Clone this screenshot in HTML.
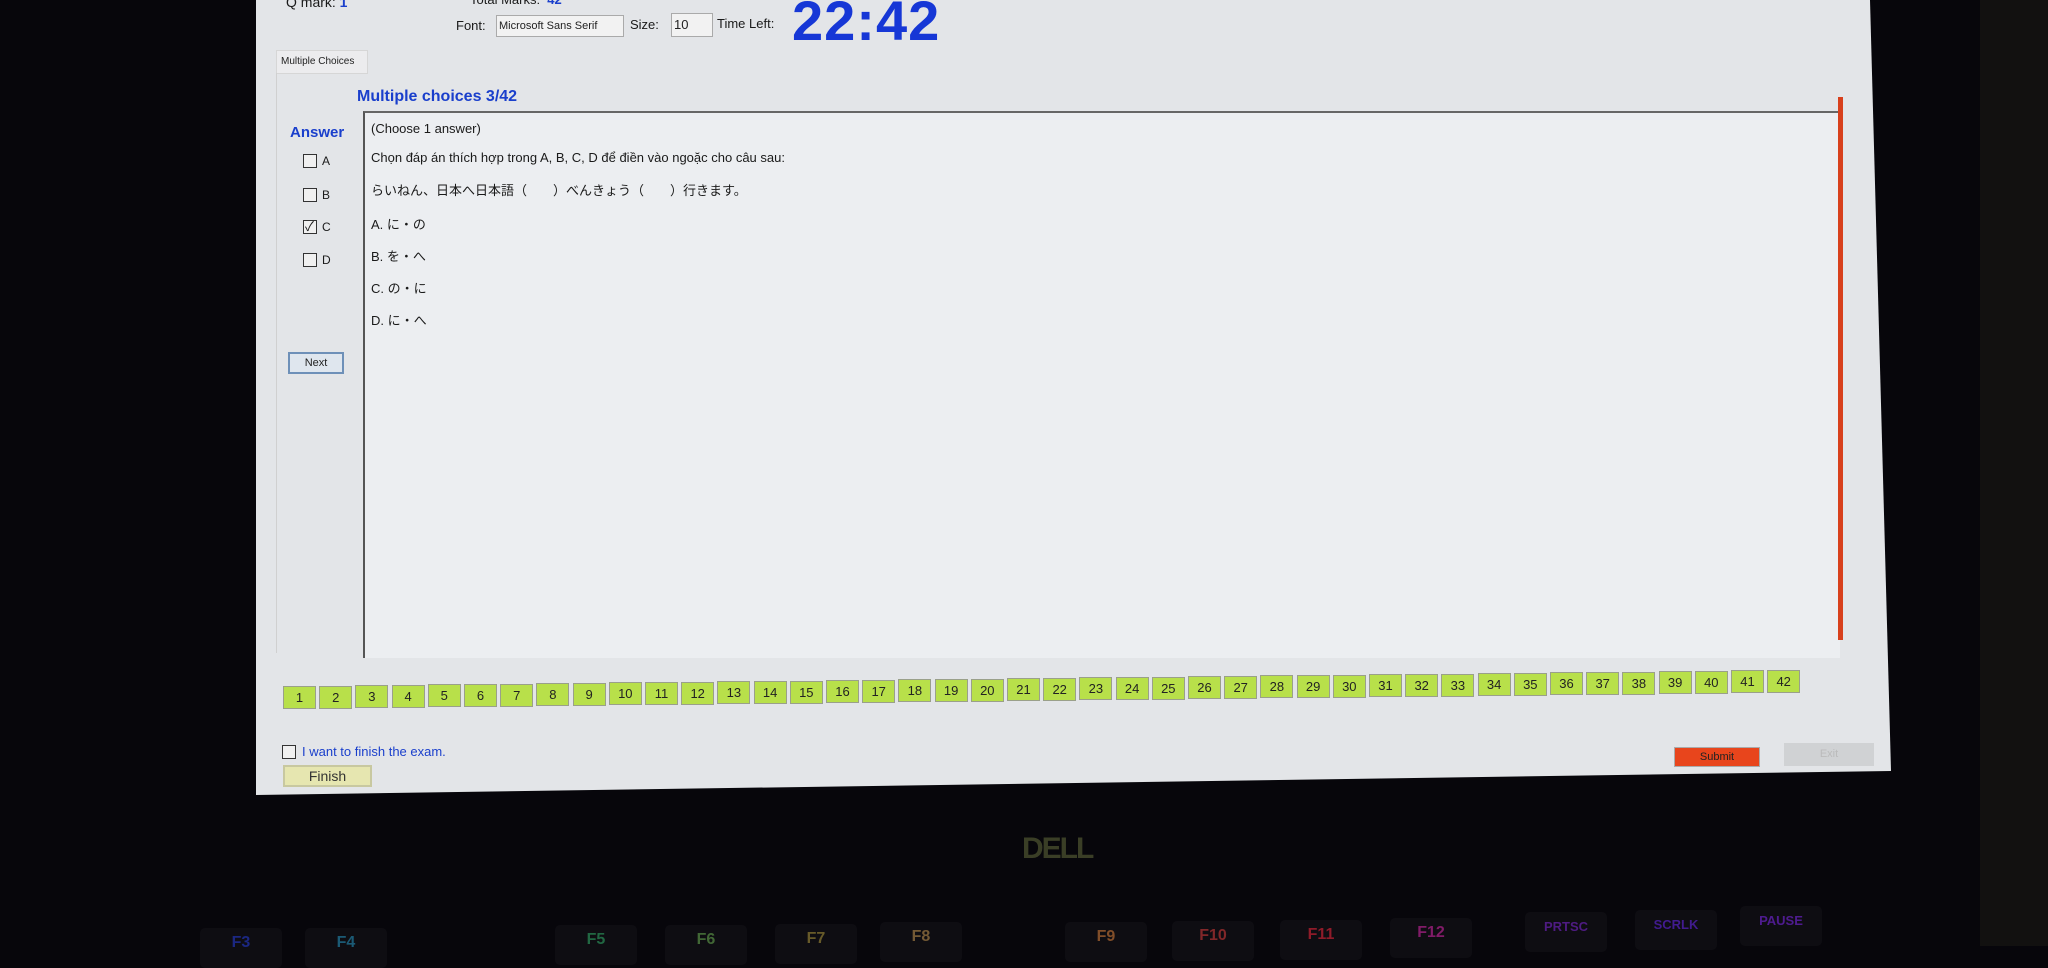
<!DOCTYPE html>
<html><head><meta charset="utf-8"><style>
*{margin:0;padding:0;box-sizing:border-box}
body{width:2048px;height:946px;background:#07060b;position:relative;overflow:hidden;font-family:"Liberation Sans","Noto Sans CJK JP",sans-serif;}
.a{position:absolute}
#scr{left:256px;top:0;width:1640px;height:795px;background:#e3e5e8;clip-path:polygon(0 0,1614px 0,1635px 771px,0 795px);}
.t{font-size:13px;color:#1a1a1a;white-space:nowrap}
.cb{width:14px;height:14px;border:1.5px solid #333;background:#f0f0f0}
.nb{width:33px;height:23px;background:#b8e04a;border:1px solid #9aa08a;font-size:13px;color:#222;text-align:center;line-height:22px}
.key{background:#111015;border-radius:5px;width:82px;height:40px;font-weight:bold;font-size:16px;text-align:center;line-height:30px;opacity:.75}
</style></head><body>
<div class="a" style="left:1980px;top:0;width:68px;height:946px;background:#121110"></div>
<div id="scr" class="a"></div>
<div class="a t" style="left:286px;top:-6px;font-size:14px">Q mark: <b style="color:#1a3fcc">1</b></div>
<div class="a t" style="left:470px;top:-8px">Total Marks: &nbsp;<b style="color:#1a3fcc">42</b></div>
<div class="a t" style="left:456px;top:18px">Font:</div>
<div class="a" style="left:496px;top:15px;width:128px;height:22px;background:#f2f2f2;border:1px solid #aaa;font-size:11px;padding:4px 2px;color:#222;white-space:nowrap;overflow:hidden">Microsoft Sans Serif</div>
<div class="a t" style="left:630px;top:17px">Size:</div>
<div class="a" style="left:671px;top:13px;width:42px;height:24px;background:#f2f2f2;border:1px solid #aaa;font-size:13px;padding:3px 2px;color:#222">10</div>
<div class="a t" style="left:717px;top:16px">Time Left:</div>
<div class="a" style="left:792px;top:-12px;font-size:56px;color:#1637d6;font-weight:bold;letter-spacing:1px">22:42</div>
<div class="a" style="left:276px;top:50px;width:92px;height:24px;background:#ececee;border:1px solid #d6d6d6;font-size:10px;padding:5px 4px;color:#222;white-space:nowrap">Multiple Choices</div>
<div class="a" style="left:276px;top:73px;width:1594px;height:580px;border-left:1px solid #d0d0d0"></div>
<div class="a" style="left:357px;top:88px;font-size:16px;font-weight:bold;color:#1a3fcc">Multiple choices 3/42</div>
<div class="a" style="left:363px;top:111px;width:1477px;height:547px;background:#eceef1;border-left:2px solid #555;border-top:2px solid #666"></div>
<div class="a" style="left:1838px;top:97px;width:5px;height:543px;background:#d8401c"></div>
<div class="a" style="left:290px;top:124px;font-size:15px;font-weight:bold;color:#1a3fcc">Answer</div>
<div class="a cb" style="left:303px;top:154px"></div><div class="a t" style="left:322px;top:154px;font-size:12px">A</div>
<div class="a cb" style="left:303px;top:188px"></div><div class="a t" style="left:322px;top:188px;font-size:12px">B</div>
<div class="a cb" style="left:303px;top:220px"></div><div class="a t" style="left:305px;top:216px;font-size:13px">✓</div><div class="a t" style="left:322px;top:220px;font-size:12px">C</div>
<div class="a cb" style="left:303px;top:253px"></div><div class="a t" style="left:322px;top:253px;font-size:12px">D</div>
<div class="a t" style="left:371px;top:121px">(Choose 1 answer)</div>
<div class="a t" style="left:371px;top:150px">Chọn đáp án thích hợp trong A, B, C, D để điền vào ngoặc cho câu sau:</div>
<div class="a t" style="left:371px;top:180px">らいねん、日本へ日本語（　　）べんきょう（　　）行きます。</div>
<div class="a t" style="left:371px;top:214px">A. に・の</div>
<div class="a t" style="left:371px;top:246px">B. を・へ</div>
<div class="a t" style="left:371px;top:278px">C. の・に</div>
<div class="a t" style="left:371px;top:310px">D. に・へ</div>
<div class="a" style="left:288px;top:352px;width:56px;height:22px;background:#dfe6ee;border:2px solid #6e90b8;font-size:11px;text-align:center;line-height:18px;color:#222">Next</div>
<div id="nums"></div>
<div class="a cb" style="left:282px;top:745px"></div>
<div class="a" style="left:302px;top:744px;font-size:13px;color:#1a3fcc">I want to finish the exam.</div>
<div class="a" style="left:283px;top:765px;width:89px;height:22px;background:#e6e6b0;border:2px solid #c8c8a0;font-size:14px;text-align:center;line-height:18px;color:#333">Finish</div>
<div class="a" style="left:1674px;top:747px;width:86px;height:20px;background:#e8451c;border:1px solid #aaa;font-size:11px;text-align:center;line-height:18px;color:#222">Submit</div>
<div class="a" style="left:1784px;top:743px;width:90px;height:23px;background:#d0d2d4;font-size:11px;text-align:center;line-height:22px;color:#bbb">Exit</div>
<div class="a" style="left:1022px;top:832px;font-size:30px;font-weight:bold;color:#3a3e26;letter-spacing:-2px">DELL</div>
<div class="a key" style="left:200px;top:928px;color:#2233aa">F3</div>
<div class="a key" style="left:305px;top:928px;color:#227799">F4</div>
<div class="a key" style="left:555px;top:925px;color:#2a8855">F5</div>
<div class="a key" style="left:665px;top:925px;color:#558844">F6</div>
<div class="a key" style="left:775px;top:924px;color:#887733">F7</div>
<div class="a key" style="left:880px;top:922px;color:#997744">F8</div>
<div class="a key" style="left:1065px;top:922px;color:#aa6633">F9</div>
<div class="a key" style="left:1172px;top:921px;color:#aa3333">F10</div>
<div class="a key" style="left:1280px;top:920px;color:#bb2233">F11</div>
<div class="a key" style="left:1390px;top:918px;color:#aa2288">F12</div>
<div class="a key" style="left:1525px;top:912px;color:#6622aa;font-size:13px">PRTSC</div>
<div class="a key" style="left:1635px;top:910px;color:#5522bb;font-size:13px">SCRLK</div>
<div class="a key" style="left:1740px;top:906px;color:#6622bb;font-size:13px">PAUSE</div>
<script>
var h='';for(var i=0;i<42;i++){var x=283+i*36.2,y=686-i*16/41;h+='<div class="a nb" style="left:'+x+'px;top:'+y+'px">'+(i+1)+'</div>';}
document.getElementById('nums').innerHTML=h;
</script>
</body></html>
